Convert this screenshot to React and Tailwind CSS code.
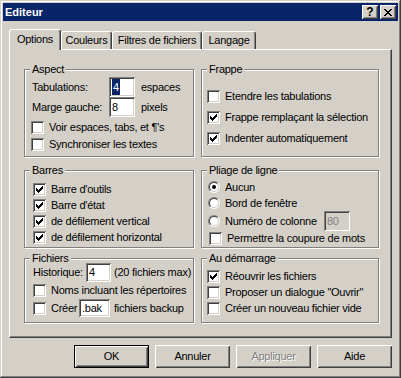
import React from 'react';

// Win2000 style bevels
const sunken = 'shadow-[inset_1px_1px_#808080,inset_-1px_-1px_#ffffff,inset_2px_2px_#404040,inset_-2px_-2px_#d4d0c8]';
const raised = 'shadow-[inset_1px_1px_#ffffff,inset_-1px_-1px_#404040,inset_2px_2px_#d4d0c8,inset_-2px_-2px_#808080]';

function Check({ on, className = '' }) {
    return (
        <span className={`relative block w-[13px] h-[13px] shrink-0 bg-white ${sunken} ${className}`}>
            {on && (
                <svg className="absolute left-[3px] top-[3px]" width="7" height="7" viewBox="0 0 7 7" shapeRendering="crispEdges">
                    <path d="M0 2h1v3H0zM1 3h1v3H1zM2 4h1v3H2zM3 3h1v3H3zM4 2h1v3H4zM5 1h1v3H5zM6 0h1v3H6z" fill="#000" />
                </svg>
            )}
        </span>
    );
}

function Radio({ on }) {
    return (
        <span className="flex w-[12px] h-[12px] shrink-0 rounded-full border border-t-[#808080] border-l-[#808080] border-r-white border-b-white">
            <span className="flex flex-1 items-center justify-center rounded-full border border-t-[#404040] border-l-[#404040] border-r-[#d4d0c8] border-b-[#d4d0c8] bg-white">
                {on && <span className="block w-[4px] h-[4px] rounded-full bg-black" />}
            </span>
        </span>
    );
}

function Field({ className = '', disabled, children }) {
    return (
        <span className={`flex items-center shrink-0 pl-[3px] ${sunken} ${disabled ? 'bg-[#d4d0c8] text-[#808080]' : 'bg-white'} ${className}`}>
            {children}
        </span>
    );
}

function Group({ title, className = '', children }) {
    return (
        <div className={`relative border border-[#808080] shadow-[inset_1px_1px_#ffffff,1px_1px_#ffffff] ${className}`}>
            <span className="absolute -top-[7px] left-[5px] px-[2px] bg-[#d4d0c8]">{title}</span>
            {children}
        </div>
    );
}

function CheckRow({ on, label, className = '' }) {
    return (
        <div className={`flex items-center h-[13px] ${className}`}>
            <Check on={on} />
            <span className="ml-[5px] whitespace-nowrap">{label}</span>
        </div>
    );
}

function Tab({ label, active, className = '' }) {
    return (
        <div
            className={`flex items-center justify-center rounded-tl-[3px] rounded-tr-[3px] border-l border-t border-r border-l-white border-t-white border-r-[#404040] shadow-[inset_-1px_0_#808080] bg-[#d4d0c8] ${active ? 'h-[21px] -mb-[1px] relative z-10 pb-[2px]' : 'h-[18px]'} ${className}`}
        >
            {label}
        </div>
    );
}

function Button({ children, isDefault, disabled }) {
    return (
        <div className={`flex items-center justify-center w-[75px] h-[23px] ${raised} ${isDefault ? 'border border-black' : ''} ${disabled ? 'text-[#808080] [text-shadow:1px_1px_0_#ffffff]' : ''}`}>
            {children}
        </div>
    );
}

export default function App() {
    return (
        <div className="w-[401px] h-[378px] bg-[#d4d0c8] p-[3px] flex flex-col text-black text-[11px] leading-[13px] tracking-[-0.25px] font-['Liberation_Sans',Arial,sans-serif] shadow-[inset_-1px_-1px_#404040,inset_1px_1px_#d4d0c8,inset_-2px_-2px_#808080,inset_2px_2px_#ffffff]">
            {/* Title bar */}
            <div className="h-[18px] bg-[#0a246a] flex items-center pl-[2px] pr-[2px]">
                <span className="font-bold text-white tracking-normal">Editeur</span>
                <div className="ml-auto flex gap-[2px]">
                    <div className={`w-[16px] h-[14px] bg-[#d4d0c8] flex items-center justify-center font-bold text-[12px] leading-none tracking-normal ${raised}`}>?</div>
                    <div className={`w-[16px] h-[14px] bg-[#d4d0c8] flex items-center justify-center ${raised}`}>
                        <svg width="8" height="7" viewBox="0 0 8 7" shapeRendering="crispEdges">
                            <path d="M0 0h2v1H0zM6 0h2v1H6zM1 1h2v1H1zM5 1h2v1H5zM2 2h4v1H2zM3 3h2v1H3zM2 4h4v1H2zM1 5h2v1H1zM5 5h2v1H5zM0 6h2v1H0zM6 6h2v1H6z" fill="#000" />
                        </svg>
                    </div>
                </div>
            </div>

            <div className="pl-[6px] pt-[8px]">
                {/* Tabs */}
                <div className="flex items-end h-[20px]">
                    <Tab label="Options" active className="w-[52px]" />
                    <Tab label="Couleurs" className="w-[51px]" />
                    <Tab label="Filtres de fichiers" className="w-[90px]" />
                    <Tab label="Langage" className="w-[54px]" />
                </div>

                {/* Tab panel */}
                <div className="w-[383px] h-[289px] border border-l-white border-t-white border-r-[#404040] border-b-[#404040] shadow-[inset_-1px_-1px_#808080] pl-[14px] pt-[19px]">
                    <div className="flex gap-[7px] h-[88px]">
                        <Group title="Aspect" className="w-[170px] pl-[6px] pt-[7px]">
                            <div className="flex items-center h-[20px]">
                                <span className="w-[78px] pl-[1px]">Tabulations:</span>
                                <Field className="w-[26px] h-[20px] pl-[2px]">
                                    <span className="bg-[#0a246a] text-white px-[1px] h-[16px] flex items-center">4</span>
                                </Field>
                                <span className="ml-[6px]">espaces</span>
                            </div>
                            <div className="flex items-center h-[20px]">
                                <span className="w-[78px] pl-[1px]">Marge gauche:</span>
                                <Field className="w-[26px] h-[20px]">8</Field>
                                <span className="ml-[6px]">pixels</span>
                            </div>
                            <div className="flex flex-col gap-[4px] mt-[4px]">
                                <CheckRow label="Voir espaces, tabs, et ¶'s" />
                                <CheckRow label="Synchroniser les textes" />
                            </div>
                        </Group>
                        <Group title="Frappe" className="w-[178px] pl-[5px] pt-[20px] flex flex-col gap-[8px]">
                            <CheckRow label="Etendre les tabulations" />
                            <CheckRow on label="Frappe remplaçant la sélection" />
                            <CheckRow on label="Indenter automatiquement" />
                        </Group>
                    </div>

                    <div className="flex gap-[7px] h-[78px] mt-[13px]">
                        <Group title="Barres" className="w-[170px] pl-[8px] pt-[12px] flex flex-col gap-[3px]">
                            <CheckRow on label="Barre d'outils" />
                            <CheckRow on label="Barre d'état" />
                            <CheckRow on label="de défilement vertical" />
                            <CheckRow on label="de défilement horizontal" />
                        </Group>
                        <Group title="Pliage de ligne" className="w-[178px] pl-[6px] pt-[8px]">
                            <div className="flex items-center h-[16px]">
                                <Radio on />
                                <span className="ml-[5px]">Aucun</span>
                            </div>
                            <div className="flex items-center h-[16px]">
                                <Radio />
                                <span className="ml-[5px]">Bord de fenêtre</span>
                            </div>
                            <div className="flex items-center h-[20px]">
                                <Radio />
                                <span className="ml-[5px] w-[99px] whitespace-nowrap">Numéro de colonne</span>
                                <Field disabled className="w-[26px] h-[20px]">80</Field>
                            </div>
                            <div className="flex items-center h-[15px] pl-[1px]">
                                <Check />
                                <span className="ml-[5px] whitespace-nowrap">Permettre la coupure de mots</span>
                            </div>
                        </Group>
                    </div>

                    <div className="flex gap-[7px] h-[65px] mt-[10px]">
                        <Group title="Fichiers" className="w-[170px] pl-[8px] pt-[4px]">
                            <div className="flex items-center h-[19px]">
                                <span className="w-[53px]">Historique:</span>
                                <Field className="w-[25px] h-[19px]">4</Field>
                                <span className="ml-[3px] whitespace-nowrap">(20 fichiers max)</span>
                            </div>
                            <div className="flex items-center h-[17px]">
                                <Check />
                                <span className="ml-[5px] whitespace-nowrap">Noms incluant les répertoires</span>
                            </div>
                            <div className="flex items-center h-[18px]">
                                <Check />
                                <span className="ml-[5px] w-[28px]">Créer</span>
                                <Field className="w-[31px] h-[18px]">.bak</Field>
                                <span className="ml-[4px] whitespace-nowrap">fichiers backup</span>
                            </div>
                        </Group>
                        <Group title="Au démarrage" className="w-[178px] pl-[5px] pt-[11px] flex flex-col gap-[3px]">
                            <CheckRow on label="Réouvrir les fichiers" />
                            <CheckRow label={'Proposer un dialogue "Ouvrir"'} />
                            <CheckRow label="Créer un nouveau fichier vide" />
                        </Group>
                    </div>
                </div>

                {/* Dialog buttons */}
                <div className="flex justify-end gap-[6px] w-[383px] mt-[7px]">
                    <Button isDefault>OK</Button>
                    <Button>Annuler</Button>
                    <Button disabled>Appliquer</Button>
                    <Button>Aide</Button>
                </div>
            </div>
        </div>
    );
}
